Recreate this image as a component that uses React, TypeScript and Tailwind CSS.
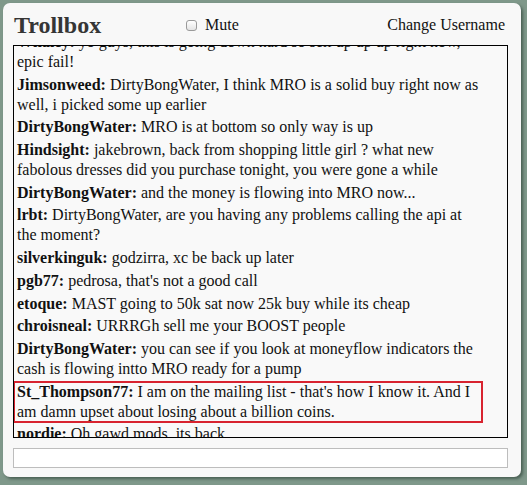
import React from "react";

type Msg = { user: string; text: string; hl?: boolean };

const msgs: Msg[] = [
  { user: "Whaley", text: "yo guys, this is going down hard so sell up up up right now, epic fail!" },
  { user: "Jimsonweed", text: "DirtyBongWater, I think MRO is a solid buy right now as well, i picked some up earlier" },
  { user: "DirtyBongWater", text: "MRO is at bottom so only way is up" },
  { user: "Hindsight", text: "jakebrown, back from shopping little girl ? what new fabolous dresses did you purchase tonight, you were gone a while" },
  { user: "DirtyBongWater", text: "and the money is flowing into MRO now..." },
  { user: "lrbt", text: "DirtyBongWater, are you having any problems calling the api at the moment?" },
  { user: "silverkinguk", text: "godzirra, xc be back up later" },
  { user: "pgb77", text: "pedrosa, that's not a good call" },
  { user: "etoque", text: "MAST going to 50k sat now 25k buy while its cheap" },
  { user: "chroisneal", text: "URRRGh sell me your BOOST people" },
  { user: "DirtyBongWater", text: "you can see if you look at moneyflow indicators the cash is flowing intto MRO ready for a pump" },
  { user: "St_Thompson77", text: "I am on the mailing list - that's how I know it. And I am damn upset about losing about a billion coins.", hl: true },
  { user: "nordie", text: "Oh gawd mods, its back." },
];

export default function App() {
  return (
    <div className="w-[527px] h-[485px] bg-[#7f988a] pt-[3px] pl-[3px]" style={{ fontFamily: '"Liberation Serif", "Times New Roman", serif' }}>
      <div className="w-[518px] h-[474px] bg-[#f8f8f8] rounded-[7px] shadow-[2px_2px_3px_rgba(40,60,50,0.6)] pl-[10px] pr-[13px] pt-[7px] flex flex-col">
        <div className="flex items-center h-[30px] pl-[1px]">
          <div className="w-[172px] text-[24px] font-bold text-[#353535] leading-none">Trollbox</div>
          <label className="flex items-center gap-[8px] text-[16px] text-[#111]">
            <span className="w-[11px] h-[11px] rounded-[3px] border border-[#9a9a9a] bg-gradient-to-b from-white to-[#e4e4e4] inline-block"></span>
            Mute
          </label>
          <div className="ml-auto mr-[3px] text-[16px] text-[#111]">Change Username</div>
        </div>
        <div className="mt-[5px] h-[393px] border border-black bg-[#f9f9f9] overflow-hidden">
          <div className="-mt-[14px] flex flex-col gap-[2.7px] text-[16px] leading-[20px] text-[#111]">
            {msgs.map((m, i) => (
              <div key={i} className={m.hl ? "w-[468px] pl-[3px] pr-[4px] outline-2 outline-[#d8232f] -outline-offset-1" : "pl-[3px] pr-[24px]"}>
                <span className="font-bold">{m.user}:</span> {m.text}
              </div>
            ))}
          </div>
        </div>
        <div className="mt-[10px] h-[20px] border border-[#bdbdbd] bg-white"></div>
      </div>
    </div>
  );
}
